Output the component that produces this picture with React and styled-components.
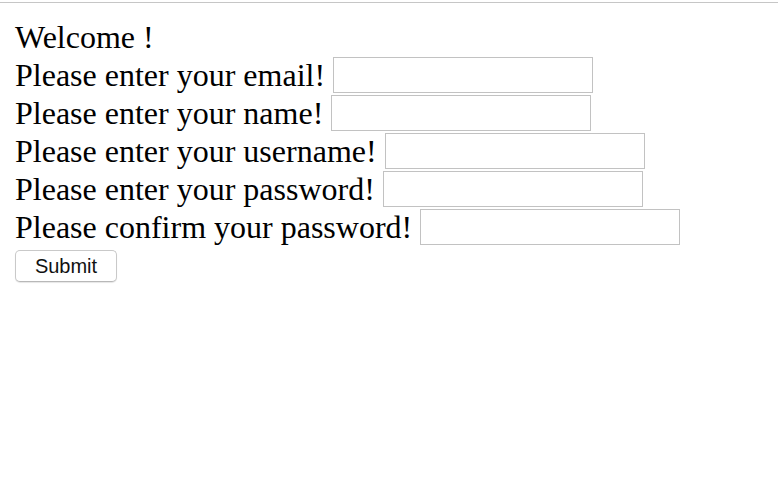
import React, { useState } from "react";
import styled, { createGlobalStyle } from "styled-components";

const GlobalStyle = createGlobalStyle`
  html, body {
    margin: 0;
    padding: 0;
    background: #fff;
  }
  body {
    font-family: "Liberation Serif", "Times New Roman", serif;
    color: #000;
  }
`;

const Frame = styled.div`
  border-top: 1px solid #c6c6c6;
  margin-top: 2px;
  min-height: 477px;
`;

const Form = styled.form`
  display: flex;
  flex-direction: column;
  align-items: flex-start;
  padding: 15px 15px 0;
  font-size: 32px;
`;

const Row = styled.div`
  display: flex;
  align-items: center;
  height: 38px;
  gap: 8px;
  white-space: nowrap;
  line-height: 36px;
`;

const Field = styled.input`
  box-sizing: border-box;
  width: 260px;
  height: 36px;
  border: 1px solid #c2c2c2;
  background: #fff;
  padding: 0 6px;
  font-size: 16px;
  outline: none;
`;

const SubmitButton = styled.button`
  margin-top: 4px;
  width: 102px;
  height: 32px;
  background: #fff;
  border: 1px solid #c9c9c9;
  border-bottom-color: #b8b8b8;
  border-radius: 5px;
  box-shadow: 0 1px 1px rgba(0, 0, 0, 0.1);
  font-family: "Liberation Sans", Arial, sans-serif;
  font-size: 20px;
  color: #111;
  cursor: pointer;
`;

const fields = [
  { name: "email", label: "Please enter your email!", type: "email" },
  { name: "name", label: "Please enter your name!", type: "text" },
  { name: "username", label: "Please enter your username!", type: "text" },
  { name: "password", label: "Please enter your password!", type: "password" },
  { name: "confirm", label: "Please confirm your password!", type: "password" },
];

export default function App() {
  const [values, setValues] = useState({});

  const onChange = (e) => setValues({ ...values, [e.target.name]: e.target.value });

  return (
    <>
      <GlobalStyle />
      <Frame>
        <Form onSubmit={(e) => e.preventDefault()}>
          <Row>Welcome !</Row>
          {fields.map((f) => (
            <Row key={f.name}>
              <span>{f.label}</span>
              <Field
                name={f.name}
                type={f.type}
                value={values[f.name] || ""}
                onChange={onChange}
              />
            </Row>
          ))}
          <SubmitButton type="submit">Submit</SubmitButton>
        </Form>
      </Frame>
    </>
  );
}
